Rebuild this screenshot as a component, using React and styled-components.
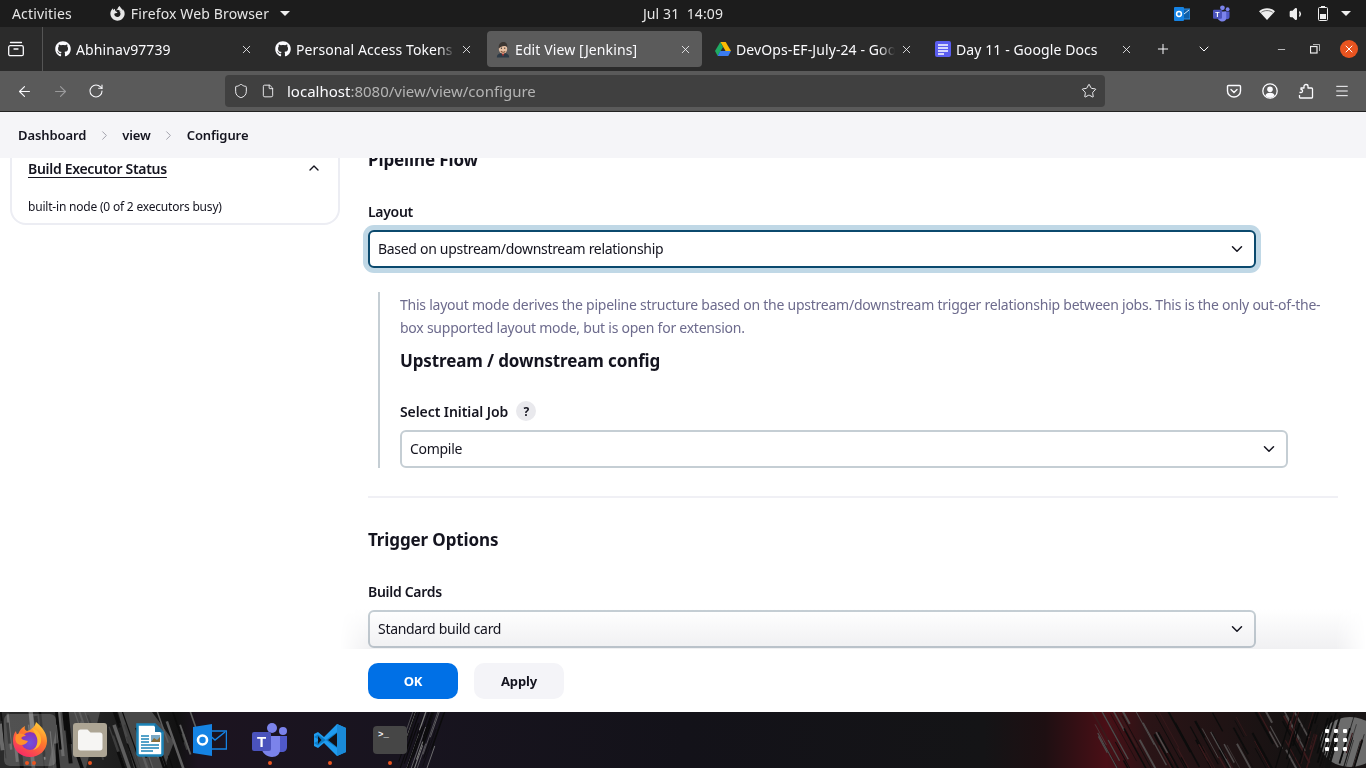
import React from "react";
import styled, { createGlobalStyle } from "styled-components";
import { FaGithub, FaFirefoxBrowser } from "react-icons/fa";
import {
  ArrowLeft,
  ArrowRight,
  RotateCw,
  Shield,
  File,
  Star,
  Menu,
  X,
  Plus,
  ChevronDown,
  ChevronUp,
  ChevronRight,
  Minus,
  Volume1
} from "lucide-react";

const FONT = `"Noto Sans", "Open Sans", sans-serif`;

const GlobalStyle = createGlobalStyle`
  html, body {
    margin: 0;
    padding: 0;
    overflow: hidden;
    background: #fff;
  }
  * {
    box-sizing: border-box;
  }
`;

const Screen = styled.div`
  width: 1366px;
  height: 768px;
  display: flex;
  flex-direction: column;
  overflow: hidden;
  font-family: ${FONT};
  font-size: 14px;
  letter-spacing: -0.3px;
  color: #14141f;
`;

/* gnome top bar */
const TopBar = styled.div`
  height: 27px;
  flex: none;
  display: grid;
  grid-template-columns: 1fr auto 1fr;
  align-items: center;
  background: #1c1c1c;
  color: #e6e6e6;
  padding: 0 12px;
  letter-spacing: 0.15px;
`;

const TopLeft = styled.div`
  display: flex;
  align-items: center;
`;

const AppMenu = styled.div`
  display: flex;
  align-items: center;
  gap: 6px;
  margin-left: 38px;
`;

const Caret = styled.span`
  width: 0;
  height: 0;
  margin-left: 5px;
  border-left: 5px solid transparent;
  border-right: 5px solid transparent;
  border-top: 5px solid #eee;
`;

const Clock = styled.div`
  white-space: pre;
  letter-spacing: 0.1px;
`;

const TopRight = styled.div`
  display: flex;
  align-items: center;
  justify-content: flex-end;
  padding-right: 3px;
`;

const TrayBox = styled.span`
  display: flex;
  justify-content: center;
  width: ${(p) => p.$w}px;
`;

/* firefox tab strip */
const TabStrip = styled.div`
  height: 44px;
  flex: none;
  display: flex;
  align-items: stretch;
  background: #2b2b2b;
  color: #fbfbfe;
  letter-spacing: 0.1px;
`;

const TabsButton = styled.div`
  width: 43px;
  margin-right: 1px;
  display: flex;
  align-items: center;
  justify-content: center;
  padding-right: 11px;
  border-right: 1px solid #555;
`;

const Tab = styled.div`
  width: ${(p) => (p.$active ? "215px" : "220px")};
  margin: ${(p) => (p.$active ? "4px 2px 4px 3px" : "4px 0")};
  padding: ${(p) => (p.$active ? "0 10px 0 9px" : "0 11px")};
  display: flex;
  align-items: center;
  gap: 5px;
  border-radius: 4px;
  background: ${(p) => (p.$active ? "#5b5b5b" : "transparent")};

  & > svg {
    flex: none;
  }
`;

const TabTitle = styled.span`
  flex: 1;
  min-width: 0;
  white-space: nowrap;
  overflow: hidden;
  -webkit-mask-image: linear-gradient(90deg, #000 90%, transparent);
  mask-image: linear-gradient(90deg, #000 90%, transparent);
`;

const StripButton = styled.div`
  width: ${(p) => p.$w}px;
  flex: none;
  margin-left: ${(p) => (p.$push ? "auto" : "0")};
  display: flex;
  align-items: center;
  justify-content: center;
`;

const CloseDot = styled.span`
  width: 18px;
  height: 18px;
  border-radius: 50%;
  background: #e95420;
  display: flex;
  align-items: center;
  justify-content: center;
`;

/* firefox nav bar */
const NavBar = styled.div`
  height: 41px;
  flex: none;
  display: flex;
  align-items: center;
  background: #5a5a5a;
  border-bottom: 1px solid #222;
  color: #fbfbfe;
`;

const NavButton = styled.div`
  width: 36px;
  display: flex;
  justify-content: center;
  opacity: ${(p) => (p.$dim ? 0.4 : 1)};
`;

const NavLeft = styled.div`
  width: 225px;
  display: flex;
  padding-left: 6px;
`;

const UrlBar = styled.div`
  width: 880px;
  height: 32px;
  display: flex;
  align-items: center;
  padding: 0 8px;
  background: #404040;
  border-radius: 4px;
`;

const PageIcon = styled(File)`
  margin-left: 12px;
`;

const UrlText = styled.div`
  flex: 1;
  margin-left: 12px;
  color: #fbfbfe;
  font-size: 15px;
  letter-spacing: 0;
`;

const UrlDim = styled.span`
  color: #b4b4b4;
`;

const NavRight = styled.div`
  display: flex;
  margin-left: 111px;
`;

/* jenkins page */
const Breadcrumbs = styled.div`
  height: 46px;
  flex: none;
  display: flex;
  align-items: center;
  padding-left: 18px;
  background: #f5f5f8;
  font-size: 13px;
  font-weight: 600;
`;

const Crumb = styled.span`
  letter-spacing: -0.1px;
`;

const CrumbSep = styled.span`
  display: flex;
  width: 36px;
  justify-content: center;
  color: #9c9ca6;
`;

const Body = styled.div`
  position: relative;
  height: 491px;
  flex: none;
  display: flex;
  overflow: hidden;
  background: #fff;

  &::after {
    content: "";
    position: absolute;
    left: 340px;
    right: 0;
    bottom: 0;
    height: 40px;
    background: linear-gradient(180deg, #fff, #f0f0f2);
    mix-blend-mode: multiply;
    -webkit-mask-image: linear-gradient(90deg, transparent, #000 30px, #000 calc(100% - 30px), transparent);
    mask-image: linear-gradient(90deg, transparent, #000 30px, #000 calc(100% - 30px), transparent);
    pointer-events: none;
  }
`;

const Sidebar = styled.aside`
  width: 368px;
  flex: none;
  padding: 0 28px 0 10px;
`;

const ExecutorCard = styled.div`
  margin-top: -20px;
  height: 87px;
  padding: 17px 16px 0;
  border: 2px solid #ecedf3;
  border-radius: 16px;
`;

const ExecutorHead = styled.div`
  height: 22px;
  display: flex;
  align-items: center;
  justify-content: space-between;
  font-weight: 600;
`;

const ExecutorTitle = styled.span`
  text-decoration: underline;
  text-underline-offset: 3px;
`;

const ExecutorBody = styled.div`
  margin-top: 19px;
  font-size: 12px;
  letter-spacing: -0.2px;
`;

const Main = styled.main`
  width: 970px;
  flex: none;
`;

const Scrolled = styled.div`
  margin-top: -10px;
`;

const SectionTitle = styled.h2`
  margin: ${(p) => p.$top || 0}px 0 0;
  height: 24px;
  line-height: 24px;
  font-size: 17px;
  font-weight: 700;
  letter-spacing: -0.12px;
`;

const Label = styled.div`
  display: flex;
  align-items: center;
  gap: 8px;
  height: 20px;
  margin-top: ${(p) => p.$top}px;
  font-weight: 600;
  letter-spacing: ${(p) => (p.$wide ? "-0.08px" : "inherit")};
`;

const SelectBox = styled.div`
  width: 888px;
  height: 38px;
  margin-top: 9px;
  padding: 0 8px 1px;
  display: flex;
  align-items: center;
  justify-content: space-between;
  background: #fff;
  border: 2px solid ${(p) => (p.$focus ? "#0b4a6e" : "#c5ced4")};
  border-radius: 6px;
  box-shadow: ${(p) => (p.$focus ? "0 0 0 5px #c0d8e6" : "none")};
`;

const Nested = styled.div`
  margin: 24px 0 0 10px;
  height: 176px;
  padding: 1px 0 0 20px;
  border-left: 2px solid #c5ced4;
`;

const HelpText = styled.p`
  margin: 0;
  width: 930px;
  line-height: 23px;
  color: #6d6b8d;
  letter-spacing: -0.24px;
`;

const HelpBadge = styled.span`
  width: 20px;
  height: 20px;
  border-radius: 50%;
  background: #e9e9ed;
  display: flex;
  align-items: center;
  justify-content: center;
  font-size: 12px;
  font-weight: 700;
`;

const Divider = styled.hr`
  margin: 28px 0 0;
  border: 0;
  height: 2px;
  background: #f0f0f5;
`;

const Footer = styled.div`
  height: 63px;
  flex: none;
  display: flex;
  align-items: flex-start;
  gap: 16px;
  padding: 14px 0 0 368px;
  background: #fff;
`;

const FormButton = styled.button`
  width: 90px;
  height: 36px;
  border: 0;
  border-radius: 10px;
  font-family: ${FONT};
  font-size: 13px;
  font-weight: 700;
  letter-spacing: -0.1px;
  color: ${(p) => (p.$primary ? "#fff" : "#14141f")};
  background: ${(p) => (p.$primary ? "#0070e6" : "#f4f4f8")};
`;

/* ubuntu dock */
const Dock = styled.div`
  position: relative;
  height: 56px;
  flex: none;
  display: flex;
  align-items: center;
  background: #131217;
  overflow: hidden;
`;

const Wallpaper = styled.svg`
  position: absolute;
  inset: 0;
`;

const DockSlot = styled.div`
  position: relative;
  width: 60px;
  height: 56px;
  flex: none;
  display: flex;
  align-items: center;
  justify-content: center;
`;

const DockIcon = styled.div`
  position: relative;
  display: flex;
`;

const DockHighlight = styled.div`
  position: absolute;
  left: 4px;
  top: 2px;
  width: 52px;
  height: 52px;
  border-radius: 6px;
  background: rgba(255, 255, 255, 0.18);
`;

const Dots = styled.div`
  position: absolute;
  bottom: 3px;
  left: 0;
  right: 0;
  display: flex;
  justify-content: center;
  gap: 3px;
`;

const Dot = styled.span`
  width: 4px;
  height: 4px;
  border-radius: 50%;
  background: #e95420;
`;

const AppGrid = styled.div`
  position: relative;
  margin-left: auto;
  margin-right: 19px;
  display: grid;
  grid-template-columns: repeat(3, 4px);
  gap: 5px;
`;

const GridDot = styled.span`
  width: 4px;
  height: 4px;
  border-radius: 1px;
  background: #fff;
`;

const rng = (seed) => {
  let s = seed;
  return () => {
    s = (s * 16807) % 2147483647;
    return s / 2147483647;
  };
};

// wallpaper scratches, drawn per band so they stay where the photo has them
const scratches = (seed, x0, x1, count, colors, lean, width = 1.2) => {
  const r = rng(seed);
  const out = [];
  for (let i = 0; i < count; i++) {
    const x = x0 + r() * (x1 - x0);
    const y = r() * 56;
    const len = 14 + r() * 40;
    const dx = lean * len;
    out.push(
      <line
        key={seed + "-" + i}
        x1={x}
        y1={y - len / 2}
        x2={x + dx}
        y2={y + len / 2}
        stroke={colors[Math.floor(r() * colors.length)]}
        strokeWidth={0.5 + r() * width}
      />
    );
  }
  return out;
};

const WallpaperArt = () => (
  <Wallpaper width="1366" height="56" viewBox="0 0 1366 56">
    <defs>
      <linearGradient id="wall" x1="0" x2="1" y1="0" y2="0">
        <stop offset="0" stopColor="#2b2b2b" />
        <stop offset="0.04" stopColor="#2a2a2a" />
        <stop offset="0.13" stopColor="#121212" />
        <stop offset="0.145" stopColor="#1c1420" />
        <stop offset="0.3" stopColor="#18141f" />
        <stop offset="0.5" stopColor="#131219" />
        <stop offset="0.72" stopColor="#141416" />
        <stop offset="0.765" stopColor="#1e0f12" />
        <stop offset="0.81" stopColor="#4a0f16" />
        <stop offset="0.84" stopColor="#2a1416" />
        <stop offset="0.95" stopColor="#151212" />
        <stop offset="1" stopColor="#1a1616" />
      </linearGradient>
    </defs>
    <rect width="1366" height="56" fill="url(#wall)" />
    <path d="M60 0h40l-14 56H48zM118 0h34l22 30-10 26h-30z" fill="#484848" />
    {scratches(11, 0, 70, 26, ["#6a6a6a", "#555", "#111", "#0c0c0c"], 0.1, 4)}
    {scratches(23, 70, 190, 34, ["#3d3d3d", "#5e5e5e", "#0d0d0d"], 0.35, 3)}
    {scratches(37, 412, 450, 34, ["#7a7a7a", "#0b0b0b", "#0b0b0b"], -0.35, 0.8)}
    {scratches(41, 1090, 1290, 70, ["#4e4a4a", "#0c0c0c", "#0c0c0c", "#3a1a1c"], 0.55, 1.6)}
    <ellipse cx="1350" cy="30" rx="30" ry="25" fill="#6c6c6c" />
    {scratches(53, 1290, 1366, 40, ["#0b0b0b", "#111", "#3a1a1c"], -0.3, 1.6)}
  </Wallpaper>
);

const DriveIcon = () => (
  <svg width="16" height="14" viewBox="0 0 16 14">
    <path d="M5.3 0h5.4l5.3 9h-5.4z" fill="#fbbc04" />
    <path d="M5.3 0 0 9l2.7 5L8 5z" fill="#1faa63" />
    <path d="M5.3 9H16l-2.7 5H2.7z" fill="#3b7cf0" />
  </svg>
);

const DocsIcon = () => (
  <svg width="16" height="16" viewBox="0 0 16 16">
    <rect width="16" height="16" rx="2" fill="#5b5ef0" />
    <path d="M3 4h10M3 7h10M3 10h10M3 13h6" stroke="#fff" strokeWidth="1.6" />
  </svg>
);

const JenkinsIcon = () => (
  <svg width="14" height="17" viewBox="0 0 16 18">
    <path d="M1 18c0-3 2-5 7-5s7 2 7 5z" fill="#2d3a46" />
    <path d="M6.500 13h3l-1.500 4z" fill="#c0322d" />
    <ellipse cx="8" cy="8" rx="4.800" ry="5.800" fill="#e6bfa2" />
    <path d="M3.200 8C2.400 2.500 6 .500 8.500 .500s5 2 4.400 6C11 4 6 4.500 3.200 8z" fill="#3c3632" />
    <path d="M5.500 11c2 1.500 4 1.500 5 0" stroke="#7d4f38" strokeWidth="1.200" fill="none" />
    <circle cx="6.200" cy="7.500" r=".7" fill="#222" />
    <circle cx="10" cy="7.500" r=".7" fill="#222" />
  </svg>
);

const TrayOutlook = () => (
  <svg width="16" height="16" viewBox="0 0 16 16">
    <rect x="6" y="3" width="10" height="10" fill="#0f5fa8" stroke="#2c8fe6" />
    <path d="M7 5l3 3 5-4" stroke="#cfe6fa" fill="none" />
    <rect x="0" y="1" width="10" height="14" rx="1" fill="#1583e4" />
    <circle cx="5" cy="8" r="2.4" fill="none" stroke="#fff" strokeWidth="1.5" />
  </svg>
);

const TeamsIcon = ({ size = 16 }) => (
  <svg width={size} height={size} viewBox="0 0 36 34">
    <circle cx="31" cy="8" r="4" fill="#7b83eb" />
    <circle cx="20" cy="5" r="5" fill="#7b83eb" />
    <path d="M24 13h11v11c0 3-2 5-5 5h-6z" fill="#5059c9" />
    <path d="M10 13h18v14c0 4-3 7-8 7s-10-4-10-8z" fill="#7b83eb" />
    <rect x="0" y="9" width="19" height="19" rx="2" fill="#4b53bc" />
    <text x="9.5" y="24" fontFamily="Liberation Sans, sans-serif" fontSize="15" fontWeight="700" textAnchor="middle" fill="#fff">
      T
    </text>
  </svg>
);

const WifiFan = () => (
  <svg width="16" height="13" viewBox="0 0 16 13">
    <path d="M8 13 0 4.200C4.500 .200 11.500 .200 16 4.200z" fill="#eee" />
    <path d="M2.300 5.300C5.500 3 10.500 3 13.700 5.300" stroke="#1c1c1c" strokeWidth=".6" fill="none" />
  </svg>
);

const BatteryIcon = () => (
  <svg width="10" height="15" viewBox="0 0 10 15">
    <rect x="3" y="0" width="4" height="2" fill="#eee" />
    <rect x="0.5" y="1.5" width="9" height="13" rx="1" fill="none" stroke="#eee" />
    <rect x="2" y="8" width="6" height="5" fill="#eee" />
  </svg>
);

const PocketIcon = () => (
  <svg width="16" height="16" viewBox="0 0 16 16" fill="none" stroke="#fbfbfe" strokeWidth="1.4">
    <path d="M2.500 2.500h11c.6 0 1 .4 1 1V8c0 3.500-3 6-6.500 6S1.500 11.500 1.500 8V3.500c0-.6.4-1 1-1z" />
    <path d="M5 6.500 8 9.500l3-3" strokeLinecap="round" />
  </svg>
);

const AccountIcon = () => (
  <svg width="16" height="16" viewBox="0 0 16 16">
    <circle cx="8" cy="8" r="7.200" fill="none" stroke="#fbfbfe" strokeWidth="1.300" />
    <circle cx="8" cy="6.300" r="2.800" fill="#fbfbfe" />
    <path d="M3.300 12.500C4 10.500 6 9.800 8 9.800s4 .7 4.700 2.700C11.500 14 9.800 14.700 8 14.700S4.500 14 3.300 12.500z" fill="#fbfbfe" />
  </svg>
);

const ExtensionIcon = () => (
  <svg width="16" height="16" viewBox="0 0 16 16" fill="none" stroke="#fbfbfe" strokeWidth="1.300" strokeLinejoin="round">
    <path d="M1.500 9.500h1.800c1.700 0 1.700-3 0-3H3V5h3V3.200c0-2.300 4-2.300 4 0V5h3.500c.6 0 1 .4 1 1v8.300c0 .4-.3.7-.7.700H2.200c-.4 0-.7-.3-.7-.7V12" />
  </svg>
);

const TabsIcon = () => (
  <svg width="16" height="16" viewBox="0 0 16 16" fill="none" stroke="#fbfbfe" strokeWidth="1.3">
    <rect x="0.700" y="4.700" width="14.600" height="10" rx="1.500" />
    <path d="M2.500 1.500h11M6 8h4" strokeLinecap="round" />
  </svg>
);

const RestoreIcon = () => (
  <svg width="10" height="10" viewBox="0 0 10 10" fill="none" stroke="#eee">
    <rect x="0.500" y="2.500" width="6.500" height="6.500" strokeWidth="1.200" />
    <path d="M3 .500h6.500V7" strokeWidth=".7" />
  </svg>
);

const DockFirefox = () => (
  <svg width="36" height="36" viewBox="0 0 36 36">
    <defs>
      <linearGradient id="ffBody" x1="0.8" y1="0" x2="0.2" y2="1">
        <stop offset="0" stopColor="#ffd43a" />
        <stop offset="0.4" stopColor="#ff7a2c" />
        <stop offset="1" stopColor="#f5246a" />
      </linearGradient>
      <radialGradient id="ffBall" cx="0.5" cy="0.6" r="0.6">
        <stop offset="0" stopColor="#6f52e0" />
        <stop offset="1" stopColor="#8c2fb5" />
      </radialGradient>
    </defs>
    <path d="M24 0c6 5 11 11 11 19 0 9-7.500 16-17 16S1 28 1 19c0-4 1-8 3-10 0 2 1 3 2 4 1-4 3-7 7-9-1 3 0 4 2 5 4-1 8-4 9-9z" fill="url(#ffBody)" />
    <circle cx="18" cy="19" r="9" fill="url(#ffBall)" />
    <path d="M4 13c3-2 7-2 10 1-3 0-5 1-5 2 1 2 4 2 7 3-2 4-7 5-10 3-3-2-3-6-2-9z" fill="#ff8f2c" />
    <path d="M20 6c6 2 10 7 9 14-1 4-4 7-8 8 4-3 5-8 4-12-1-3-3-6-5-10z" fill="#ffb52e" />
  </svg>
);

const DockFiles = () => (
  <svg width="34" height="34" viewBox="0 0 34 34">
    <rect width="34" height="34" rx="3" fill="#ada594" />
    <path d="M5 9c0-1.500 1-2.500 2.500-2.500h7l3 3H27c1.500 0 2.500 1 2.500 2.500v13c0 1.500-1 2.500-2.500 2.500H7.500C6 27.500 5 26.500 5 25z" fill="#f6f5f3" />
  </svg>
);

const DockWriter = () => (
  <svg width="28" height="34" viewBox="0 0 28 34">
    <path d="M1.500 1.500h17l8 8v21c0 1-1 2-2 2h-21c-1 0-2-1-2-2z" fill="#fff" stroke="#1c84b8" strokeWidth="2.500" />
    <path d="M19 0l9 9h-9z" fill="#1c6f9f" />
    <rect x="15" y="12" width="9" height="7" fill="#7aa9c6" />
    <path d="M15 19l3-4 3 2 3-3v5z" fill="#8a6d3b" />
    <path d="M5 13h8M5 16h8M5 19h8M5 22h18M5 25h18M5 28h12" stroke="#1c84b8" strokeWidth="1.600" />
  </svg>
);

const DockOutlook = () => (
  <svg width="34" height="32" viewBox="0 0 34 32">
    <rect x="12" y="7" width="21.500" height="18" fill="none" stroke="#1583e4" strokeWidth="1.500" />
    <path d="M14 9l8 7 10-8" fill="none" stroke="#1583e4" strokeWidth="1.500" />
    <path d="M0 3 19 0v32L0 29z" fill="#1583e4" />
    <circle cx="9.500" cy="16" r="4.500" fill="none" stroke="#fff" strokeWidth="2.600" />
  </svg>
);

const DockCode = () => (
  <svg width="32" height="32" viewBox="0 0 32 32">
    <path d="M23 0l9 4v24l-9 4-13-13-6 5-4-2v-12l4-2 6 5z" fill="#1f9cf0" />
    <path d="M23 0l9 4v24l-9 4z" fill="#1a8ad8" />
    <path d="M4 10.500 23 24V8L4 21.500 0 19 6 16 0 13z" fill="#0065a9" opacity="0.6" />
    <path d="M23 9v14l-9-7z" fill="#131217" />
    <path d="M4 12l3.500 4L4 20z" fill="#131217" />
  </svg>
);

const TerminalGlyph = styled.div`
  width: 34px;
  height: 28px;
  border-radius: 4px;
  background: #464646;
  color: #f2f2f2;
  font-family: "Liberation Mono", monospace;
  font-size: 9px;
  font-weight: 700;
  letter-spacing: 0;
  line-height: 12px;
  padding: 3px 0 0 5px;
`;

const tabs = [
  { title: "Abhinav97739", icon: <FaGithub size={16} color="#fbfbfe" /> },
  { title: "Personal Access Tokens (Classic)", icon: <FaGithub size={16} color="#fbfbfe" /> },
  { title: "Edit View [Jenkins]", icon: <JenkinsIcon />, active: true },
  { title: "DevOps-EF-July-24 - Google Drive", icon: <DriveIcon /> },
  { title: "Day 11 - Google Docs", icon: <DocsIcon /> }
];

const dockApps = [
  { icon: <DockFirefox />, dots: 2, active: true },
  { icon: <DockFiles />, dots: 1 },
  { icon: <DockWriter />, dots: 0 },
  { icon: <DockOutlook />, dots: 0 },
  { icon: <TeamsIcon size={36} />, dots: 1 },
  { icon: <DockCode />, dots: 1 },
  { icon: <TerminalGlyph>{">_"}</TerminalGlyph>, dots: 1 }
];

const Select = ({ focus, children }) => (
  <SelectBox $focus={focus}>
    <span>{children}</span>
    <ChevronDown size={18} strokeWidth={2} color="#14141f" />
  </SelectBox>
);

const App = () => (
  <Screen>
    <GlobalStyle />
    <TopBar>
      <TopLeft>
        Activities
        <AppMenu>
          <FaFirefoxBrowser size={15} />
          Firefox Web Browser
          <Caret />
        </AppMenu>
      </TopLeft>
      <Clock>{"Jul 31  14:09"}</Clock>
      <TopRight>
        <TrayBox $w={20}>
          <TrayOutlook />
        </TrayBox>
        <TrayBox $w={58}>
          <TeamsIcon size={17} />
        </TrayBox>
        <TrayBox $w={34}>
          <WifiFan />
        </TrayBox>
        <TrayBox $w={26}>
          <Volume1 size={16} fill="#eee" color="#eee" />
        </TrayBox>
        <TrayBox $w={26}>
          <BatteryIcon />
        </TrayBox>
        <Caret />
      </TopRight>
    </TopBar>

    <TabStrip>
      <TabsButton>
        <TabsIcon />
      </TabsButton>
      {tabs.map((t) => (
        <Tab key={t.title} $active={t.active}>
          {t.icon}
          <TabTitle>{t.title}</TabTitle>
          <X size={13} strokeWidth={1.5} />
        </Tab>
      ))}
      <StripButton $w={38}>
        <Plus size={16} strokeWidth={1.5} />
      </StripButton>
      <StripButton $w={44}>
        <ChevronDown size={16} strokeWidth={1.5} />
      </StripButton>
      <StripButton $w={34} $push>
        <Minus size={11} strokeWidth={1.5} />
      </StripButton>
      <StripButton $w={34}>
        <RestoreIcon />
      </StripButton>
      <StripButton $w={34}>
        <CloseDot>
          <X size={12} strokeWidth={2} color="#fff" />
        </CloseDot>
      </StripButton>
    </TabStrip>

    <NavBar>
      <NavLeft>
        <NavButton>
          <ArrowLeft size={17} strokeWidth={1.6} />
        </NavButton>
        <NavButton $dim>
          <ArrowRight size={17} strokeWidth={1.6} />
        </NavButton>
        <NavButton>
          <RotateCw size={16} strokeWidth={1.6} />
        </NavButton>
      </NavLeft>
      <UrlBar>
        <Shield size={16} strokeWidth={1.4} />
        <PageIcon size={14} strokeWidth={1.5} />
        <UrlText>
          localhost<UrlDim>:8080/view/view/configure</UrlDim>
        </UrlText>
        <Star size={16} strokeWidth={1.4} />
      </UrlBar>
      <NavRight>
        <NavButton>
          <PocketIcon />
        </NavButton>
        <NavButton>
          <AccountIcon />
        </NavButton>
        <NavButton>
          <ExtensionIcon />
        </NavButton>
        <NavButton>
          <Menu size={16} strokeWidth={1.5} />
        </NavButton>
      </NavRight>
    </NavBar>

    <Breadcrumbs>
      <Crumb>Dashboard</Crumb>
      <CrumbSep>
        <ChevronRight size={15} strokeWidth={1.5} />
      </CrumbSep>
      <Crumb>view</Crumb>
      <CrumbSep>
        <ChevronRight size={15} strokeWidth={1.5} />
      </CrumbSep>
      <Crumb>Configure</Crumb>
    </Breadcrumbs>

    <Body>
      <Sidebar>
        <ExecutorCard>
          <ExecutorHead>
            <ExecutorTitle>Build Executor Status</ExecutorTitle>
            <ChevronUp size={16} strokeWidth={2} />
          </ExecutorHead>
          <ExecutorBody>built-in node (0 of 2 executors busy)</ExecutorBody>
        </ExecutorCard>
      </Sidebar>
      <Main>
        <Scrolled>
          <SectionTitle>Pipeline Flow</SectionTitle>
          <Label $top={29}>Layout</Label>
          <Select focus>Based on upstream/downstream relationship</Select>
          <Nested>
            <HelpText>
              This layout mode derives the pipeline structure based on the upstream/downstream trigger relationship
              between jobs. This is the only out-of-the-box supported layout mode, but is open for extension.
            </HelpText>
            <SectionTitle $top={10}>Upstream / downstream config</SectionTitle>
            <Label $top={28} $wide>
              Select Initial Job
              <HelpBadge>?</HelpBadge>
            </Label>
            <Select>Compile</Select>
          </Nested>
          <Divider />
          <SectionTitle $top={30}>Trigger Options</SectionTitle>
          <Label $top={29}>Build Cards</Label>
          <Select>Standard build card</Select>
        </Scrolled>
      </Main>
    </Body>

    <Footer>
      <FormButton $primary>OK</FormButton>
      <FormButton>Apply</FormButton>
    </Footer>

    <Dock>
      <WallpaperArt />
      {dockApps.map((app, i) => (
        <DockSlot key={i}>
          {app.active && <DockHighlight />}
          <DockIcon>{app.icon}</DockIcon>
          <Dots>
            {Array.from({ length: app.dots }).map((_, d) => (
              <Dot key={d} />
            ))}
          </Dots>
        </DockSlot>
      ))}
      <AppGrid>
        {Array.from({ length: 9 }).map((_, i) => (
          <GridDot key={i} />
        ))}
      </AppGrid>
    </Dock>
  </Screen>
);

export default App;
